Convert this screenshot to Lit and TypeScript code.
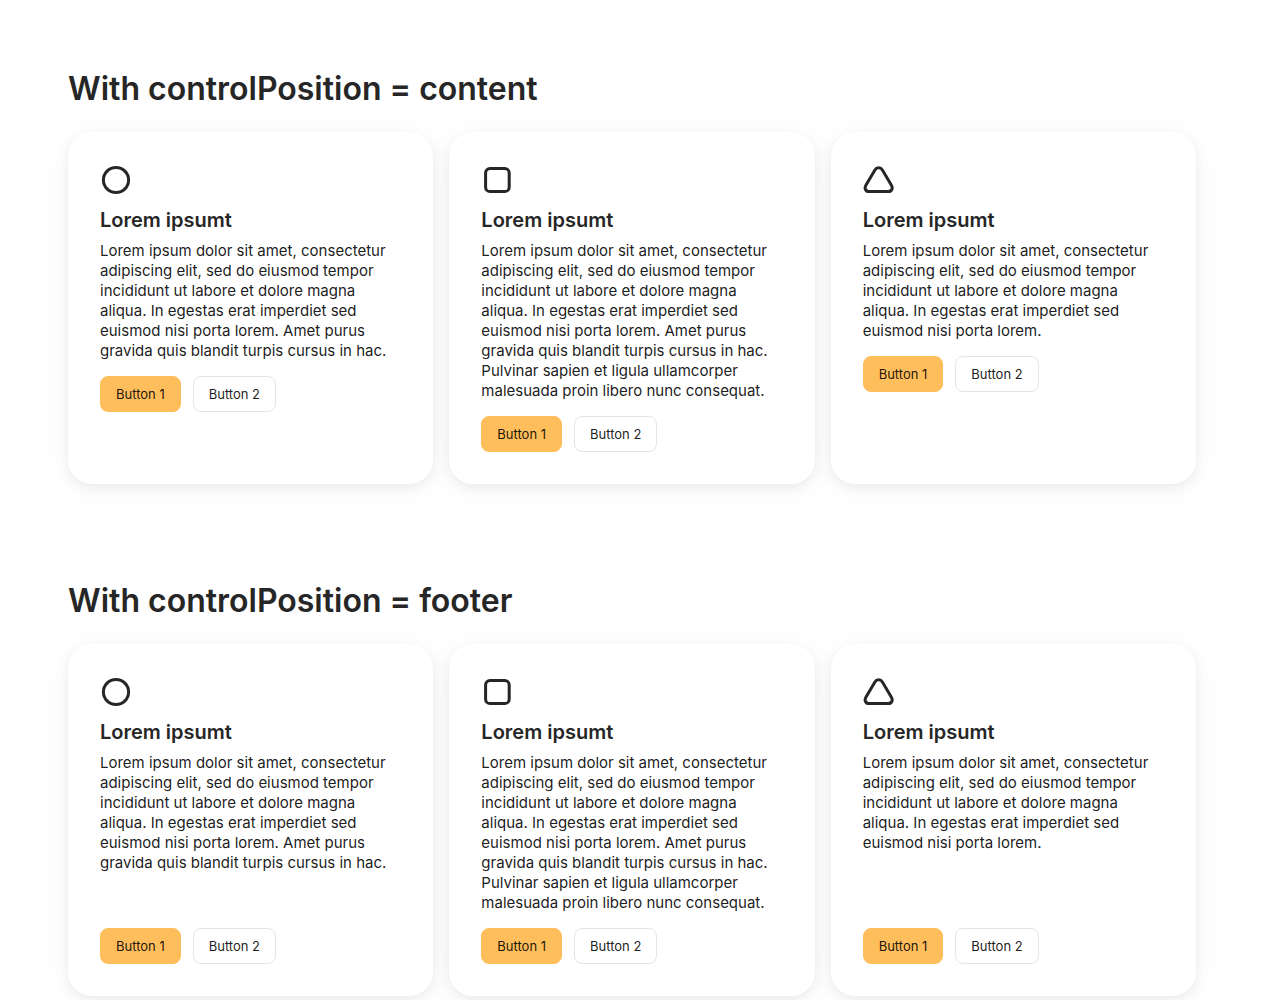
import { LitElement, html, css, svg } from "lit";
import { customElement, property } from "lit/decorators.js";

type Shape = "circle" | "square" | "triangle";
type ControlPosition = "content" | "footer";

interface Card {
  icon: Shape;
  title: string;
  text: string;
}

const base =
  "Lorem ipsum dolor sit amet, consectetur adipiscing elit, sed do eiusmod tempor incididunt ut labore et dolore magna aliqua. In egestas erat imperdiet sed euismod nisi porta lorem.";
const middle = `${base} Amet purus gravida quis blandit turpis cursus in hac.`;
const long = `${middle} Pulvinar sapien et ligula ullamcorper malesuada proin libero nunc consequat.`;

const cards: Card[] = [
  { icon: "circle", title: "Lorem ipsumt", text: middle },
  { icon: "square", title: "Lorem ipsumt", text: long },
  { icon: "triangle", title: "Lorem ipsumt", text: base },
];

const shapes = {
  circle: svg`<circle cx="16" cy="16" r="12.6" />`,
  square: svg`<rect x="4.6" y="4.4" width="23.6" height="23.2" rx="4.4" />`,
  triangle: svg`<path d="M11.9 6 2.9 21.2C1.1 24.3 2.6 27.5 5.9 27.5H25.4C28.7 27.5 30.2 24.3 28.4 21.2L19.4 6C17.7 3.1 13.6 3.1 11.9 6Z" />`,
};

@customElement("info-card")
export class InfoCard extends LitElement {
  @property({ attribute: false }) card!: Card;
  @property() controls: ControlPosition = "content";

  static styles = css`
    :host {
      display: flex;
      flex-direction: column;
      box-sizing: border-box;
      padding: 32px;
      border-radius: 24px;
      background: #fff;
      box-shadow: 0 4px 12px rgba(0, 0, 0, 0.06), 0 4px 32px rgba(0, 0, 0, 0.04);
    }
    .icon {
      display: block;
      width: 32px;
      height: 32px;
      fill: none;
      stroke: #262626;
      stroke-width: 3;
      stroke-linejoin: round;
    }
    .title {
      margin: 12px 0 9px;
      font-size: 20px;
      line-height: 24px;
      font-weight: 600;
      color: #262626;
    }
    .text {
      margin: 0;
      font-size: 15px;
      line-height: 20px;
    }
    .controls {
      display: flex;
      flex-wrap: wrap;
      gap: 12px;
      padding-top: 15px;
    }
    .controls.footer {
      margin-top: auto;
    }
    .button {
      height: 36px;
      padding: 0 15px;
      border: 1px solid #e5e5e5;
      border-radius: 8px;
      background: #fff;
      color: rgba(0, 0, 0, 0.9);
      font: 400 13px/16px Inter, sans-serif;
      cursor: pointer;
    }
    .button.primary {
      border-color: #ffbe5c;
      background: #ffbe5c;
    }
  `;

  render() {
    return html`
      <svg class="icon" viewBox="0 0 32 32" aria-hidden="true">${shapes[this.card.icon]}</svg>
      <h3 class="title">${this.card.title}</h3>
      <p class="text">${this.card.text}</p>
      <div class="controls ${this.controls}">
        <button class="button primary" type="button">Button 1</button>
        <button class="button" type="button">Button 2</button>
      </div>
    `;
  }
}

@customElement("app-root")
export class AppRoot extends LitElement {
  static styles = css`
    :host {
      display: block;
      padding: 70px 68px;
      background: #fff;
      color: rgba(0, 0, 0, 0.9);
      font-family: Inter, sans-serif;
    }
    .section + .section {
      margin-top: 98px;
    }
    .heading {
      margin: 0 0 24px;
      font-size: 32px;
      line-height: 38px;
      font-weight: 600;
      color: #262626;
    }
    .grid {
      display: grid;
      grid-template-columns: repeat(3, minmax(0, 1fr));
      gap: 16px;
    }
  `;

  private section(position: ControlPosition) {
    return html`
      <section class="section">
        <h2 class="heading">With controlPosition = ${position}</h2>
        <div class="grid">
          ${cards.map((card) => html`<info-card .card=${card} controls=${position}></info-card>`)}
        </div>
      </section>
    `;
  }

  render() {
    return html`${this.section("content")}${this.section("footer")}`;
  }
}
